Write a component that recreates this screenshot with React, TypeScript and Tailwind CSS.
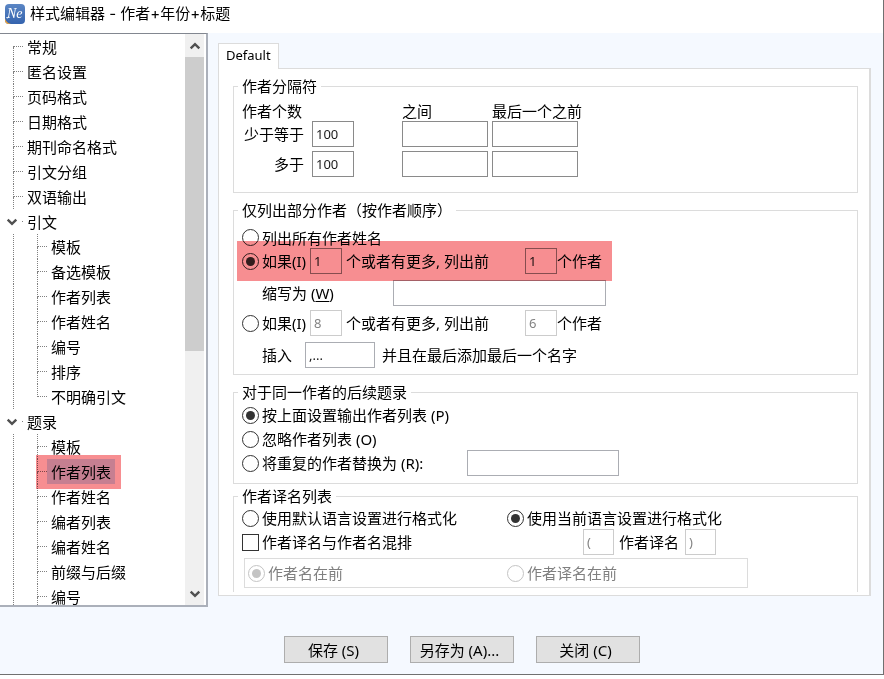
import { ReactNode } from 'react';
import clsx from 'clsx';

type TreeItem = {
  label: string;
  children?: string[];
};

const tree: TreeItem[] = [
  { label: '常规' },
  { label: '匿名设置' },
  { label: '页码格式' },
  { label: '日期格式' },
  { label: '期刊命名格式' },
  { label: '引文分组' },
  { label: '双语输出' },
  {
    label: '引文',
    children: ['模板', '备选模板', '作者列表', '作者姓名', '编号', '排序', '不明确引文'],
  },
  {
    label: '题录',
    children: ['模板', '作者列表', '作者姓名', '编者列表', '编者姓名', '前缀与后缀', '编号'],
  },
];

function Logo() {
  return (
    <svg className="size-5 shrink-0" viewBox="0 0 20 20" aria-hidden="true">
      <defs>
        <linearGradient id="logo-bg" x1="0" y1="0" x2="0" y2="1">
          <stop offset="0" stopColor="#5b86c4" />
          <stop offset="1" stopColor="#3463ae" />
        </linearGradient>
      </defs>
      <rect width="20" height="20" rx="4" fill="url(#logo-bg)" />
      <path d="M0 14.5c.8 2.6 2.6 4.6 6 5.5H4a4 4 0 0 1-4-4z" fill="#f3a536" />
      <path d="M1.4 13.6c.9.7 1.8.2 2.4-1.2" fill="none" stroke="#fff" strokeWidth="1" />
      <text x="2" y="14" fontSize="14" fontStyle="italic" fontFamily="Liberation Serif, serif" fill="#fff">
        Ne
      </text>
    </svg>
  );
}

function Chevron({ up = false }: { up?: boolean }) {
  return (
    <svg className="h-[8px] w-[12px]" viewBox="0 0 12 8" aria-hidden="true">
      <path
        d={up ? 'M1.7 6.4 6 2.1l4.3 4.3' : 'M1.7 1.6 6 5.9l4.3-4.3'}
        fill="none"
        stroke="#505050"
        strokeWidth="2.4"
      />
    </svg>
  );
}

// Dotted connector, the vertical line can be cut at the top or the bottom half
function Guide({ first = false, last = false }: { first?: boolean; last?: boolean }) {
  return (
    <span className="flex h-full w-[10px] flex-col">
      <span className={clsx('flex-1 border-b border-dotted border-[#808080]', !first && 'border-l')} />
      <span className={clsx('flex-1 border-dotted border-[#808080]', !last && 'border-l')} />
    </span>
  );
}

function TreeView() {
  return (
    <ul className="h-0 min-h-full flex-1 overflow-hidden">
      {tree.map((item, i) => (
        <li key={item.label}>
          <div className="flex h-[25px] items-center">
            {item.children ? (
              <button type="button" aria-label={'展开 ' + item.label} className="flex w-[23px] items-center pl-[6px]">
                <Chevron />
                <span className="ml-1 w-px border-b border-[#808080]" />
              </button>
            ) : (
              <span className="h-full pl-[13px]">
                <Guide first={i === 0} />
              </span>
            )}
            <button type="button" className="px-1">{item.label}</button>
          </div>
          {item.children && (
            <ul>
              {item.children.map((child) => {
                const active = item.label === '题录' && child === '作者列表';
                return (
                  <li key={child} className="relative flex h-[25px] items-center pl-[13px]">
                    <span className="h-full w-6 border-l border-dotted border-[#808080]" />
                    <Guide last={child === '不明确引文'} />
                    <button type="button" className={clsx('h-full px-1', active && 'bg-[#cde4ff]')}>
                      {child}
                    </button>
                    {active && (
                      <span className="pointer-events-none absolute -top-1 left-9 z-10 h-[34px] w-[85px] bg-[#f78e91] mix-blend-multiply" />
                    )}
                  </li>
                );
              })}
            </ul>
          )}
        </li>
      ))}
    </ul>
  );
}

function Scrollbar() {
  return (
    <div className="mr-[2px] flex w-[19px] flex-col bg-[#f0f0f0]">
      <button type="button" aria-label="向上" className="flex h-[23px] items-center justify-center">
        <Chevron up />
      </button>
      <div className="flex-1">
        <div className="h-[56%] bg-[#cdcdcd]" />
      </div>
      <button type="button" aria-label="向下" className="flex h-[23px] items-center justify-center">
        <Chevron />
      </button>
    </div>
  );
}

function Group({ title, className, children }: { title: string; className?: string; children: ReactNode }) {
  return (
    <fieldset className={clsx('min-w-0 border border-[#dcdcdc] pl-2', className)}>
      <legend className="-ml-1 px-1 leading-4">{title}</legend>
      {children}
    </fieldset>
  );
}

type FieldProps = {
  label: string;
  value?: string;
  className?: string;
  disabled?: boolean;
};

function Field({ label, value = '', className, disabled }: FieldProps) {
  return (
    <input
      type="text"
      aria-label={label}
      defaultValue={value}
      disabled={disabled}
      className={clsx(
        'h-[26px] shrink-0 border bg-white px-[3px] pb-px text-[13px] outline-none',
        disabled ? 'border-[#cccccc] text-[#838383]' : 'text-[#1a1a1a]',
        className,
      )}
    />
  );
}

type RadioProps = {
  name: string;
  checked?: boolean;
  disabled?: boolean;
  className?: string;
  children: ReactNode;
};

function Radio({ name, checked, disabled, className, children }: RadioProps) {
  return (
    <label className={clsx('flex shrink-0 items-center gap-[3px] whitespace-nowrap', disabled && 'text-[#808080]', className)}>
      <input
        type="radio"
        name={name}
        defaultChecked={checked}
        disabled={disabled}
        className="grid size-[17px] shrink-0 appearance-none place-content-center rounded-full border border-[#333333] bg-white before:size-[9px] before:rounded-full checked:before:bg-[#333333] disabled:border-[#c4c4c4] disabled:checked:before:bg-[#c4c4c4]"
      />
      <span>{children}</span>
    </label>
  );
}

function Separators() {
  return (
    <Group title="作者分隔符" className="pt-[7px] pb-[15px]">
      <div className="grid grid-cols-[70px_90px_90px_90px] whitespace-nowrap">
        <span className="col-span-2 leading-5">作者个数</span>
        <span className="leading-5">之间</span>
        <span className="leading-5">最后一个之前</span>
      </div>
      <div className="grid grid-cols-[70px_90px_90px_90px] items-center gap-y-1">
        <span className="pr-2 text-right">少于等于</span>
        <Field label="少于等于" value="100" className="w-[42px] border-[#8a8a8a]" />
        <Field label="少于等于 之间" className="w-[86px] border-[#8a8a8a]" />
        <Field label="少于等于 最后一个之前" className="w-[86px] border-[#8a8a8a]" />
        <span className="pr-2 text-right">多于</span>
        <Field label="多于" value="100" className="w-[42px] border-[#8a8a8a]" />
        <Field label="多于 之间" className="w-[86px] border-[#8a8a8a]" />
        <Field label="多于 最后一个之前" className="w-[86px] border-[#8a8a8a]" />
      </div>
    </Group>
  );
}

function PartialAuthors() {
  return (
    <Group title="仅列出部分作者（按作者顺序）" className="mt-[9px] pt-[9px] pb-[6px]">
      <div className="flex h-[21px] items-center">
        <Radio name="partial">列出所有作者姓名</Radio>
      </div>
      <div className="relative flex items-center">
        <Radio name="partial" checked className="w-[68px]">如果(I)</Radio>
        <Field label="作者个数" value="1" className="w-8 border-[#8a8a8a]" />
        <span className="w-[183px] pl-1">个或者有更多, 列出前</span>
        <Field label="列出个数" value="1" className="w-8 border-[#8a8a8a]" />
        <span>个作者</span>
        <span className="pointer-events-none absolute -top-[7px] -left-[5px] h-10 w-[375px] bg-[#f78e91] mix-blend-multiply" />
      </div>
      <div className="mt-[6px] flex items-center pl-5">
        <span className="w-[131px]">
          缩写为 (<u className="underline-offset-2">W</u>)
        </span>
        <Field label="缩写为" className="w-[213px] border-[#abadb3]" />
      </div>
      <div className="mt-1 flex items-center">
        <Radio name="partial" className="w-[68px]">如果(I)</Radio>
        <Field label="作者个数" value="8" disabled className="w-8" />
        <span className="w-[183px] pl-1">个或者有更多, 列出前</span>
        <Field label="列出个数" value="6" disabled className="w-8" />
        <span>个作者</span>
      </div>
      <div className="mt-[6px] flex items-center pl-5">
        <span className="w-[43px]">插入</span>
        <Field label="插入" value=",..." className="w-[70px] border-[#abadb3]" />
        <span className="pl-[7px]">并且在最后添加最后一个名字</span>
      </div>
    </Group>
  );
}

function FollowingRecords() {
  return (
    <Group title="对于同一作者的后续题录" className="mt-[9px] pt-[3px] pb-2">
      <div className="flex h-6 items-center">
        <Radio name="following" checked>按上面设置输出作者列表 (P)</Radio>
      </div>
      <div className="flex h-6 items-center">
        <Radio name="following">忽略作者列表 (O)</Radio>
      </div>
      <div className="flex h-6 items-center">
        <Radio name="following" className="w-[225px]">将重复的作者替换为 (R):</Radio>
        <Field label="替换为" className="w-[152px] border-[#abadb3]" />
      </div>
    </Group>
  );
}

function Translations() {
  return (
    <Group title="作者译名列表" className="mt-1 border-b-0 pt-[2px] pb-1">
      <div className="flex h-6 items-center">
        <Radio name="language" className="w-[265px]">使用默认语言设置进行格式化</Radio>
        <Radio name="language" checked>使用当前语言设置进行格式化</Radio>
      </div>
      <div className="flex h-6 items-center">
        <label className="flex w-[341px] items-center gap-[3px]">
          <input type="checkbox" className="size-[17px] appearance-none border border-[#333333] bg-white checked:bg-[#333333]" />
          作者译名与作者名混排
        </label>
        <Field label="左括号" value="(" disabled className="w-[31px]" />
        <span className="w-[71px] pl-[5px]">作者译名</span>
        <Field label="右括号" value=")" disabled className="w-[31px]" />
      </div>
      <div className="mt-1 ml-[2px] flex h-[30px] max-w-[504px] items-center border border-[#dcdcdc] pl-[3px]">
        <Radio name="order" checked disabled className="w-[259px]">作者名在前</Radio>
        <Radio name="order" disabled>作者译名在前</Radio>
      </div>
    </Group>
  );
}

function FooterButton({ children }: { children: ReactNode }) {
  return (
    <button type="button" className="h-[27px] w-[104px] border border-[#adadad] bg-[#e1e1e1] pr-1 whitespace-nowrap">
      {children}
    </button>
  );
}

export default function App() {
  return (
    <div className="border-r border-b border-[#707070] bg-[#f5f9ff] font-['Noto_Sans','Noto_Sans_CJK_SC',sans-serif] text-[15px] leading-5 text-black">
      <header className="flex h-[33px] items-center gap-[5px] bg-white pb-[6px] pl-[5px]">
        <Logo />
        <h1 className="font-['Inter','Noto_Sans_CJK_SC',sans-serif]">样式编辑器 - 作者+年份+标题</h1>
      </header>

      <div className="flex">
        <aside className="flex w-[208px] shrink-0 border-t border-r-2 border-b-2 border-t-[#828790] border-r-[#abb0ba] border-b-[#abb0ba] bg-white">
          <TreeView />
          <Scrollbar />
        </aside>

        <main className="min-w-0 flex-1 pt-[10px] pr-3 pb-[11px] pl-[10px]">
          <button
            type="button"
            className="relative -mb-px block h-[26px] border border-b-0 border-[#dcdcdc] bg-white px-[7px] pb-[3px] text-[13px]"
          >
            Default
          </button>
          <div className="border border-r-2 border-[#dcdcdc] bg-white pt-[9px] pr-[11px] pb-[3px] pl-[14px]">
            <Separators />
            <PartialAuthors />
            <FollowingRecords />
            <Translations />
          </div>
        </main>
      </div>

      <footer className="flex justify-center gap-[22px] pt-[29px] pb-[11px] pl-10">
        <FooterButton>保存 (S)</FooterButton>
        <FooterButton>另存为 (A)...</FooterButton>
        <FooterButton>关闭 (C)</FooterButton>
      </footer>
    </div>
  );
}
